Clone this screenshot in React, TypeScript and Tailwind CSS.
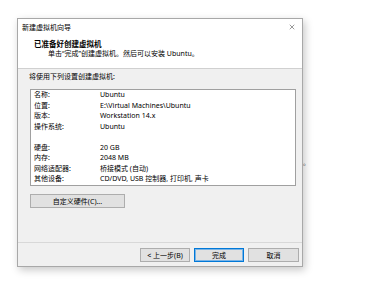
import { X } from 'lucide-react'

const rows: [string, string][] = [
  ['名称:', 'Ubuntu'],
  ['位置:', 'E:\\Virtual Machines\\Ubuntu'],
  ['版本:', 'Workstation 14.x'],
  ['操作系统:', 'Ubuntu'],
  ['', ''],
  ['硬盘:', '20 GB'],
  ['内存:', '2048 MB'],
  ['网络适配器:', '桥接模式 (自动)'],
  ['其他设备:', 'CD/DVD, USB 控制器, 打印机, 声卡'],
]

export default function App() {
  return (
    <div className="relative w-[390px] h-[307px] bg-white overflow-hidden font-['Segoe_UI','Noto_Sans','Noto_Sans_CJK_SC',sans-serif] text-black">
      {/* 被对话框挡住的背景文字 */}
      <span className="absolute left-[296px] top-[158px] text-[7px] leading-[10px] text-[#555]">子。</span>

      <div className="relative z-10 ml-[17px] mt-[18px] w-[286px] h-[249px] flex flex-col border border-[#a8a8a8] bg-[#f0f0f0] shadow-[2px_3px_8px_rgba(0,0,0,0.22)]">
        {/* 标题和说明 */}
        <div className="h-[50px] bg-white border-b border-[#d0d0d0]">
          <div className="h-[16px] flex items-center justify-between pl-[4px] pr-[6px]">
            <span className="text-[7px] leading-none">新建虚拟机向导</span>
            <X className="w-[8px] h-[8px] text-[#333]" strokeWidth={1.5} />
          </div>
          <div className="mt-[4px] h-[10px] pl-[16px] text-[7.5px] leading-[10px] font-bold">已准备好创建虚拟机</div>
          <div className="h-[10px] pl-[30px] text-[7px] leading-[10px]">
            单击“完成”创建虚拟机。然后可以安装 Ubuntu。
          </div>
        </div>

        {/* 设置摘要 */}
        <div className="flex-1 flex flex-col">
          <div className="mt-[3px] h-[10px] pl-[11px] text-[7px] leading-[10px]">将使用下列设置创建虚拟机:</div>
          <div className="mt-[7px] ml-[12px] w-[266px] h-[97px] border border-[#a0a0a0] bg-white">
            {rows.map(([label, value], i) => (
              <div key={i} className="flex h-[10.5px] pl-[3px] text-[7px] leading-[10.5px]">
                <span className="w-[66px] shrink-0">{label}</span>
                <span className="whitespace-nowrap">{value}</span>
              </div>
            ))}
          </div>
          <button className="mt-[8px] ml-[12px] w-[95px] h-[14px] border border-[#adadad] bg-[#e1e1e1] text-[7px] leading-none">
            自定义硬件(C)...
          </button>
        </div>

        {/* 底部按钮 */}
        <div className="h-[24px] border-t border-[#d8d8d8] flex justify-end items-start gap-[4px] pt-[5px] pr-[3px]">
          <button className="w-[50px] h-[14px] border border-[#adadad] bg-[#e1e1e1] text-[7px] leading-none">
            &lt; 上一步(B)
          </button>
          <button className="w-[50px] h-[14px] border border-[#0078d7] shadow-[inset_0_0_0_1px_#7ab4e6] bg-[#e1e1e1] text-[7px] leading-none">
            完成
          </button>
          <button className="w-[51px] h-[14px] border border-[#adadad] bg-[#e1e1e1] text-[7px] leading-none">
            取消
          </button>
        </div>
      </div>
    </div>
  )
}
